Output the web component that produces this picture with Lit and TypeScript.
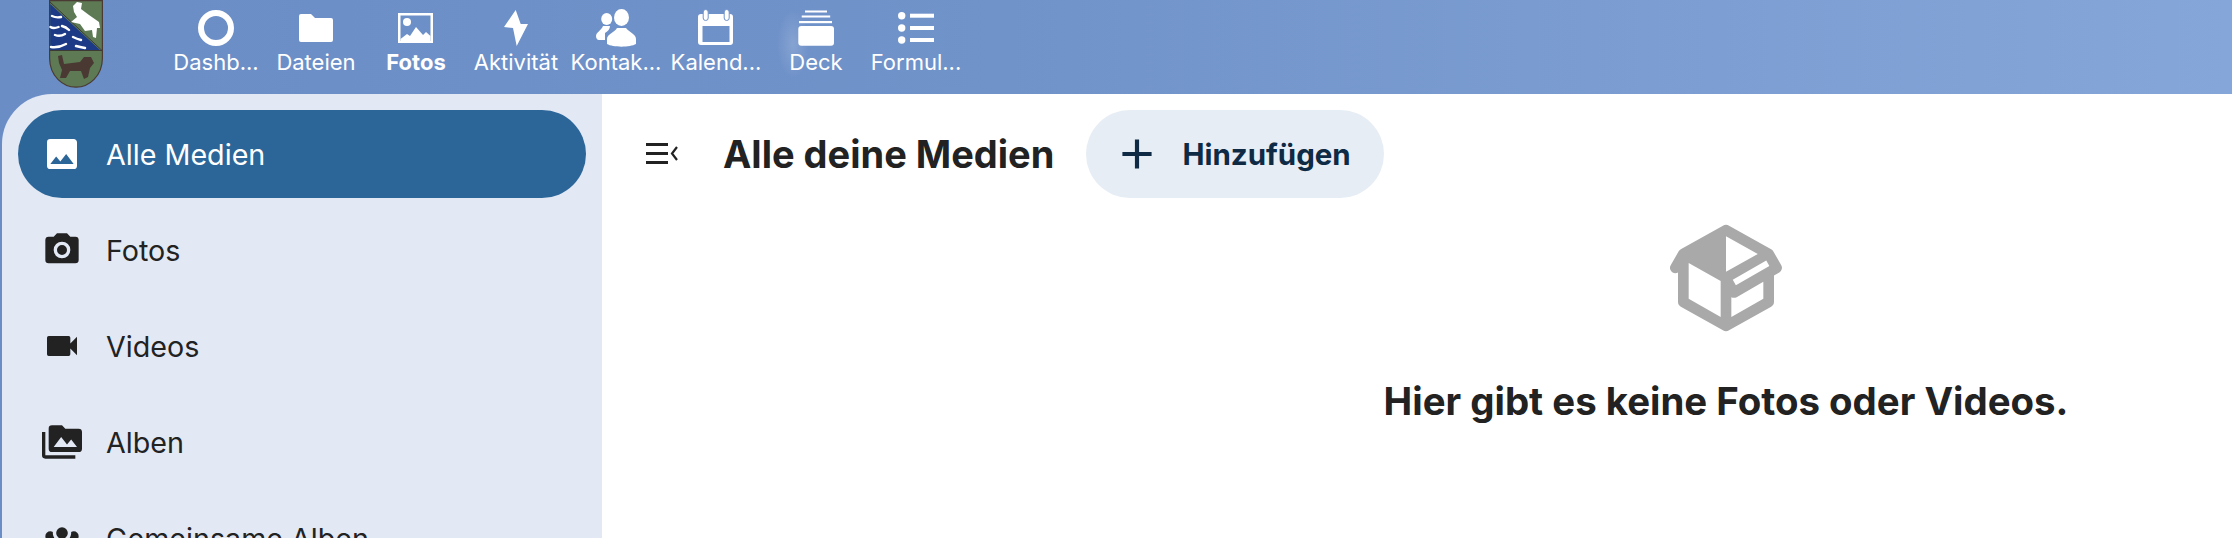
import { LitElement, html, css, svg } from "lit";
import { customElement } from "lit/decorators.js";

const navIcons = {
  dash: svg`<circle cx="20" cy="20" r="15" fill="none" stroke="#fff" stroke-width="6"/>`,
  files: svg`<path fill="#fff" d="M5,6H15L19,10H35a2,2 0 0 1 2,2V32a2,2 0 0 1 -2,2H5a2,2 0 0 1 -2,-2V8a2,2 0 0 1 2,-2Z"/>`,
  photos: svg`<path fill="#fff" fill-rule="evenodd" d="M2,5H37V35H2ZM4.5,7.5V33H34.5V7.5Z"/><circle cx="11" cy="14" r="4" fill="#fff"/><path fill="#fff" d="M4.5,31L11,26L14,28L20,19L27,27L30,24L34.5,28V33H4.5Z"/>`,
  activity: svg`<path fill="#fff" d="M19.7,2L8,19L17,20L20.7,38L32,16L24.7,16Z"/>`,
  contacts: svg`<ellipse cx="25.5" cy="9.5" rx="7.5" ry="8.5" fill="#fff"/><ellipse cx="10.7" cy="11" rx="5.5" ry="6" fill="#fff"/><path fill="#fff" d="M11,36V31C11,26 19,24 21,20L30,20C33,24 40,26 40,31V36C34,39.5 17,39.5 11,36Z"/><path fill="#fff" d="M0,28C0,24 5,23 7,18L14,18C14,21 12,23 9,25V32H3C1,32 0,30 0,28Z"/>`,
  calendar: svg`<path fill="#fff" fill-rule="evenodd" d="M5,6H34a3,3 0 0 1 3,3V34a3,3 0 0 1 -3,3H5a3,3 0 0 1 -3,-3V9a3,3 0 0 1 3,-3ZM6.5,18V34H33.5V18Z"/><rect x="7.2" y="1.5" width="5" height="11" rx="2.5" fill="#fff" stroke="#7093ca"/><rect x="28.2" y="1.5" width="5" height="11" rx="2.5" fill="#fff" stroke="#7093ca"/>`,
  deck: svg`<rect x="2.3" y="18" width="35.7" height="19.7" rx="3" fill="#fff"/><rect x="9" y="2.5" width="22" height="2" fill="#fff"/><rect x="5.7" y="7.5" width="28.5" height="2" fill="#fff"/><rect x="3" y="13" width="33" height="2.2" fill="#fff"/>`,
  forms: svg`<g fill="#fff"><circle cx="5.7" cy="7.7" r="3.7"/><circle cx="5.7" cy="20" r="3.7"/><circle cx="5.7" cy="32" r="3.7"/><rect x="14" y="5.7" width="24" height="4"/><rect x="14" y="18" width="24" height="4"/><rect x="14" y="30" width="24" height="4"/></g>`,
};

const nav = [
  { label: "Dashb...", icon: navIcons.dash },
  { label: "Dateien", icon: navIcons.files },
  { label: "Fotos", icon: navIcons.photos, active: true },
  { label: "Aktivität", icon: navIcons.activity },
  { label: "Kontak...", icon: navIcons.contacts },
  { label: "Kalend...", icon: navIcons.calendar },
  { label: "Deck", icon: navIcons.deck },
  { label: "Formul...", icon: navIcons.forms },
];

const side = [
  { label: "Alle Medien", active: true, d: "M21,19V5C21,3.89 20.1,3 19,3H5A2,2 0 0,0 3,5V19A2,2 0 0,0 5,21H19A2,2 0 0,0 21,19M8.5,13.5L11,16.5L14.5,12L19,18H5L8.5,13.5Z" },
  { label: "Fotos", d: "M4,4H7L9,2H15L17,4H20A2,2 0 0,1 22,6V18A2,2 0 0,1 20,20H4A2,2 0 0,1 2,18V6A2,2 0 0,1 4,4M12,7A5,5 0 0,0 7,12A5,5 0 0,0 12,17A5,5 0 0,0 17,12A5,5 0 0,0 12,7M12,9A3,3 0 0,1 15,12A3,3 0 0,1 12,15A3,3 0 0,1 9,12A3,3 0 0,1 12,9Z" },
  { label: "Videos", d: "M17,10.5V7A1,1 0 0,0 16,6H4A1,1 0 0,0 3,7V17A1,1 0 0,0 4,18H16A1,1 0 0,0 17,17V13.5L21,17.5V6.5L17,10.5Z" },
  { label: "Alben", d: "M7,15L11.5,9L15,13.5L17.5,10.5L21,15M22,4H14L12,2H6A2,2 0 0,0 4,4V16A2,2 0 0,0 6,18H22A2,2 0 0,0 24,16V6A2,2 0 0,0 22,4M2,6H0V11H0V20A2,2 0 0,0 2,22H20V20H2V6Z" },
  { label: "Gemeinsame Alben", d: "M12,5.5A3.5,3.5 0 0,1 15.5,9A3.5,3.5 0 0,1 12,12.5A3.5,3.5 0 0,1 8.5,9A3.5,3.5 0 0,1 12,5.5M5,8C5.56,8 6.08,8.15 6.53,8.42C6.38,9.85 6.8,11.27 7.66,12.38C7.16,13.34 6.16,14 5,14A3,3 0 0,1 2,11A3,3 0 0,1 5,8M19,8A3,3 0 0,1 22,11A3,3 0 0,1 19,14C17.84,14 16.84,13.34 16.34,12.38C17.2,11.27 17.62,9.85 17.47,8.42C17.92,8.15 18.44,8 19,8M5.5,18.25C5.5,16.18 8.41,14.5 12,14.5C15.59,14.5 18.5,16.18 18.5,18.25V20H5.5V18.25M0,20V18.5C0,17.11 1.89,15.94 4.45,15.6C3.86,16.28 3.5,17.22 3.5,18.25V20H0M24,20H20.5V18.25C20.5,17.22 20.14,16.28 19.55,15.6C22.11,15.94 24,17.11 24,18.5V20Z" },
];

@customElement("app-root")
export class AppRoot extends LitElement {
  static styles = css`
    :host {
      display: flex;
      flex-direction: column;
      width: 2232px;
      height: 538px;
      overflow: hidden;
      font-family: Inter, "Liberation Sans", sans-serif;
      background:
        radial-gradient(ellipse 16px 34px at 793px 44px, rgba(255, 255, 255, 0.16), rgba(255, 255, 255, 0)),
        linear-gradient(90deg, #6b8dc6 0%, #7093ca 45%, #85a6d8 100%);
      color: #222;
    }
    .header {
      height: 94px;
      flex: none;
      display: flex;
      align-items: flex-start;
      padding-left: 49px;
    }
    .logo { width: 54px; height: 88px; flex: none; display: block; }
    .nav { display: flex; margin-left: 63px; }
    .nav-item {
      width: 100px;
      display: flex;
      flex-direction: column;
      align-items: center;
      color: #fff;
      font-size: 22px;
      padding-top: 8px;
    }
    .nav-item svg { width: 40px; height: 40px; display: block; }
    .nav-label {
      margin-top: 1px;
      line-height: 26px;
      text-align: center;
      white-space: nowrap;
    }
    .nav-item.active .nav-label { font-weight: 700; }
    .body { flex: 1; display: flex; margin-left: 2px; min-height: 0; }
    .sidebar {
      width: 600px;
      flex: none;
      box-sizing: border-box;
      padding: 16px 16px 0;
      background: #e2e9f5;
      border-top-left-radius: 50px;
      display: flex;
      flex-direction: column;
      gap: 8px;
    }
    .side-item {
      height: 88px;
      flex: none;
      display: flex;
      align-items: center;
      gap: 24px;
      padding-left: 24px;
      border-radius: 44px;
      font-size: 28.7px;
    }
    .side-item svg { width: 40px; height: 40px; flex: none; fill: currentColor; }
    .side-item.active { background: #2c6699; color: #fff; }
    .main { flex: 1; background: #fff; display: flex; flex-direction: column; }
    .toolbar {
      display: flex;
      align-items: center;
      height: 88px;
      margin-top: 16px;
      padding-left: 44px;
      flex: none;
    }
    .menu { width: 32px; height: 24px; flex: none; display: block; }
    .title { margin: 0 0 0 45px; font-size: 38px; font-weight: 700; white-space: nowrap; }
    .add {
      margin-left: 32px;
      width: 298px;
      height: 88px;
      box-sizing: border-box;
      padding-left: 26px;
      display: flex;
      align-items: center;
      gap: 20px;
      background: #e6edf4;
      border-radius: 44px;
      color: #0e2a45;
      font-size: 29.5px;
      font-weight: 700;
    }
    .add svg { width: 50px; height: 50px; flex: none; fill: currentColor; }
    .empty {
      padding: 16px 0 0 618px;
      display: flex;
      flex-direction: column;
      align-items: center;
    }
    .empty svg { width: 128px; height: 128px; fill: #a9a9a9; display: block; }
    .empty h2 { margin: 36px 0 0; font-size: 38.4px; font-weight: 700; white-space: nowrap; }
  `;

  render() {
    return html`
      <div class="header">
        <svg class="logo" viewBox="0 0 54 88">
          <path fill="#5d7a54" stroke="#4b3a33" stroke-width="1.2" d="M0.6,0.6H53.4V58C53.4,76 40,87.2 27,87.2C14,87.2 0.6,76 0.6,58Z"/>
          <path fill="#1d3a86" d="M1.2,4L51,50H1.2Z"/>
          <path fill="none" stroke="#3d3a33" stroke-width="1" d="M1,2L53,50.5H1"/>
          <g fill="none" stroke="#fff" stroke-width="2.4" stroke-linecap="round">
            <path d="M3,16q4,2 9,1M1.5,27q3,2 8,0M13,26q4,1 7,4M6,35q5,2 10,-1M24,37q4,2 8,3M2,47q8,1 15,-3M27,46q4,1 9,2"/>
          </g>
          <path fill="#fff" d="M24,6L28,2L33,3L32,9L40,15L50,22L51,28L48,28L47,38L44,37L43,30L36,31L31,24L22,22L28,17L25,12Z"/>
          <path fill="#4a3833" d="M9,56L13,55L15,64L31,62L35,57L42,57L45,63L41,68L39,77L35,79L32,71L21,71L17,78L11,78L13,70L10,63Z"/>
        </svg>
        <div class="nav">
          ${nav.map(
            (n) => html`<div class="nav-item ${n.active ? "active" : ""}">
              <svg viewBox="0 0 40 40">${n.icon}</svg>
              <div class="nav-label">${n.label}</div>
            </div>`
          )}
        </div>
      </div>
      <div class="body">
        <div class="sidebar">
          ${side.map(
            (s) => html`<div class="side-item ${s.active ? "active" : ""}">
              <svg viewBox="0 0 24 24"><path d="${s.d}"/></svg>
              <span>${s.label}</span>
            </div>`
          )}
        </div>
        <div class="main">
          <div class="toolbar">
            <svg class="menu" viewBox="0 0 32 24">
              <path fill="#222" d="M0,1H22V4H0ZM0,10H22V13H0ZM0,19H22V22H0Z"/>
              <path fill="none" stroke="#222" stroke-width="2.2" d="M31,5L26,11.5L31,18"/>
            </svg>
            <h1 class="title">Alle deine Medien</h1>
            <div class="add">
              <svg viewBox="0 0 24 24"><path d="M19,13H13V19H11V13H5V11H11V5H13V11H19V13Z"/></svg>
              <span>Hinzufügen</span>
            </div>
          </div>
          <div class="empty">
            <svg viewBox="0 0 24 24"><path d="M2,10.96C1.5,10.68 1.35,10.07 1.63,9.59L3.13,7C3.24,6.8 3.41,6.66 3.6,6.58L11.43,2.18C11.59,2.06 11.79,2 12,2C12.21,2 12.41,2.06 12.57,2.18L20.47,6.62C20.66,6.72 20.82,6.88 20.91,7.08L22.36,9.6C22.64,10.08 22.47,10.69 22,10.96L21,11.54V16.5C21,16.88 20.79,17.21 20.47,17.38L12.57,21.82C12.41,21.94 12.21,22 12,22C11.79,22 11.59,21.94 11.43,21.82L3.53,17.38C3.21,17.21 3,16.88 3,16.5V10.96C2.7,11.13 2.32,11.14 2,10.96M12,4.15V4.15L12,10.85V10.85L17.96,7.5L12,4.15M5,15.91L11,19.29V12.58L5,9.21V15.91M19,15.91V12.69L14,15.59C13.67,15.77 13.3,15.76 13,15.6V19.29L19,15.91M13.85,13.36L20.13,9.73L19.55,8.72L13.27,12.35L13.85,13.36Z"/></svg>
            <h2>Hier gibt es keine Fotos oder Videos.</h2>
          </div>
        </div>
      </div>
    `;
  }
}
